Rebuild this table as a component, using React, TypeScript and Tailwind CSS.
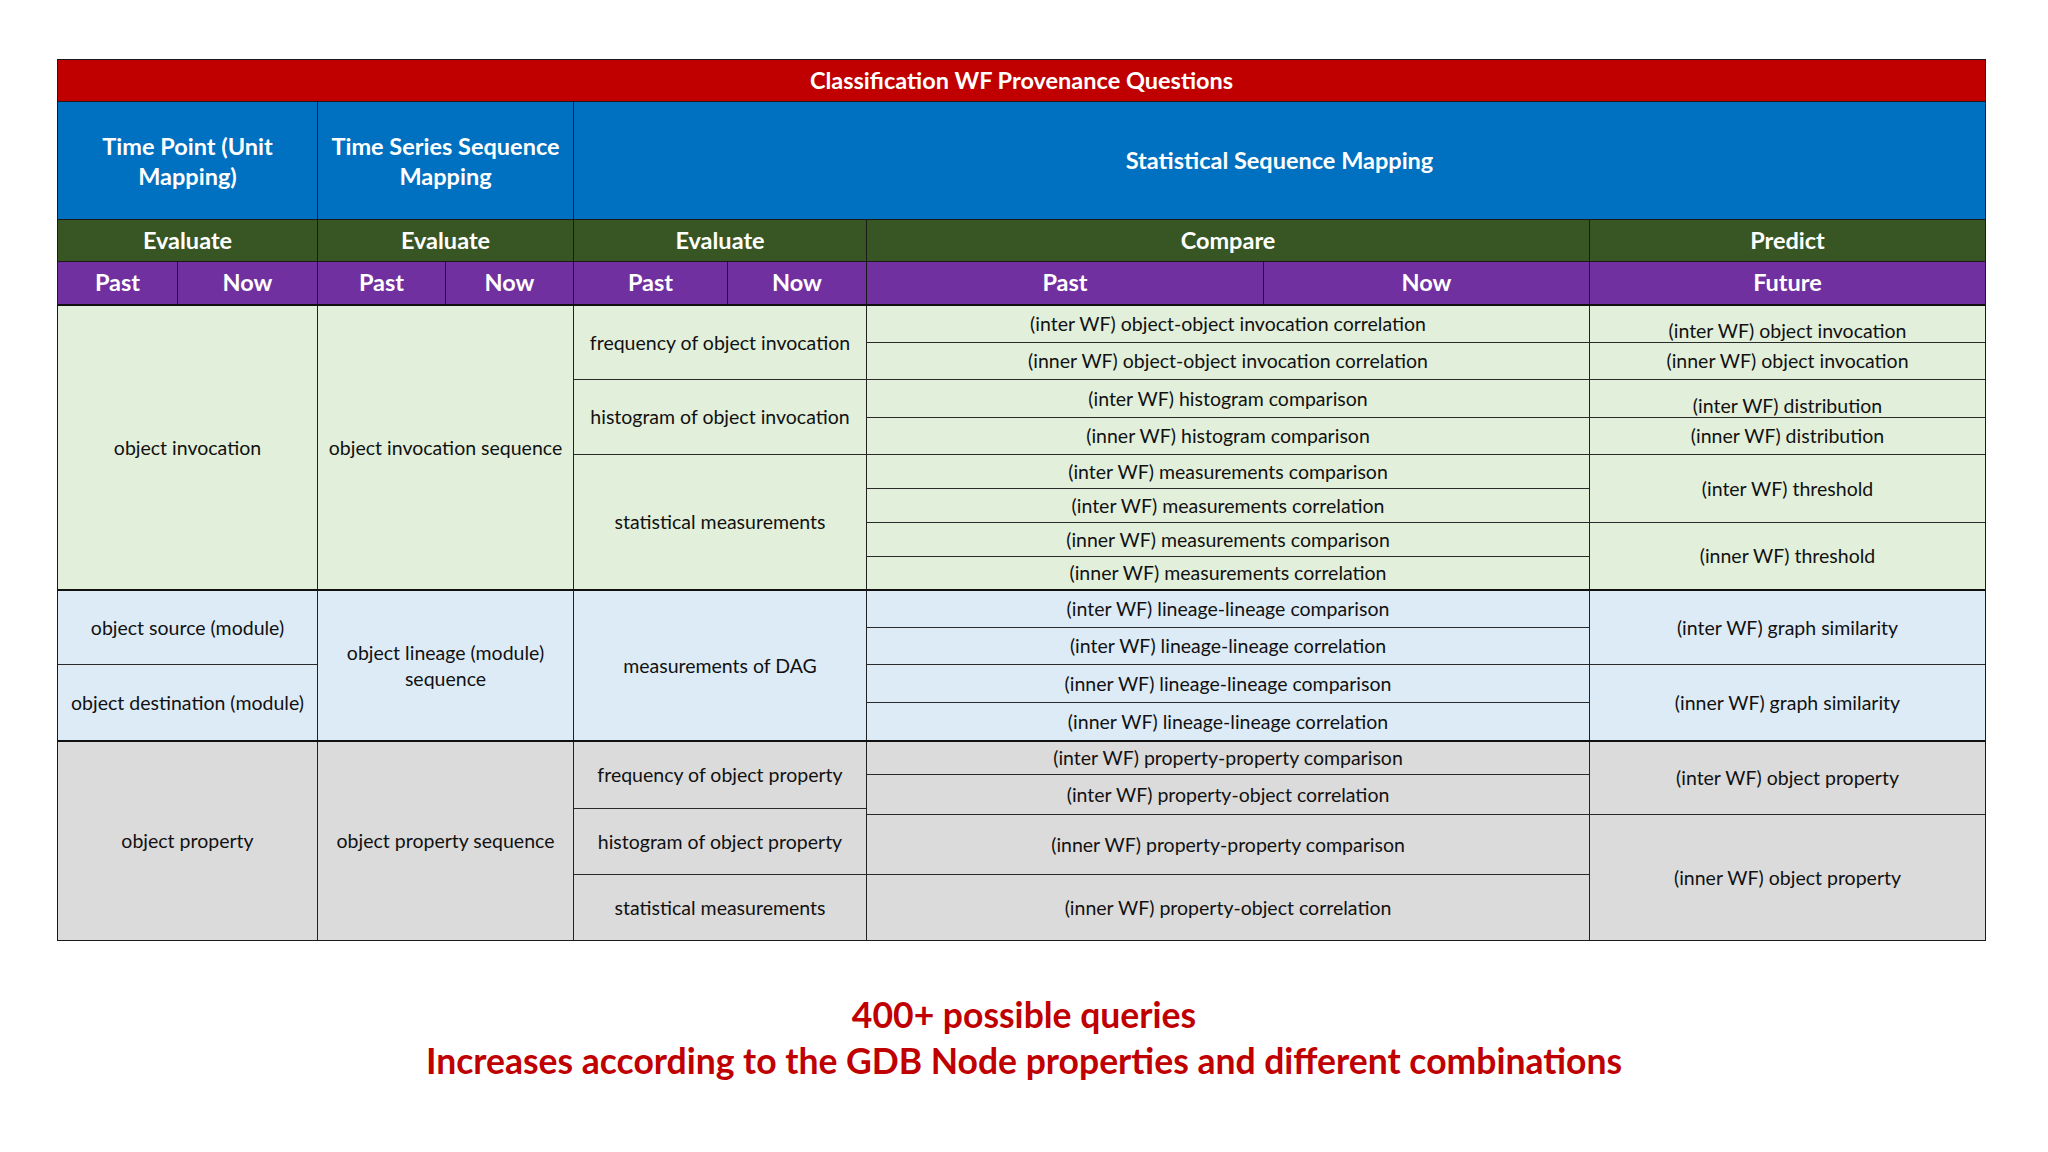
type Cell = { t: string; h?: string; low?: boolean }
type Col = { w: string; cells: Cell[] }
type Section = { bg: string; h: string; last?: boolean; cols: Col[] }

const sections: Section[] = [
  {
    bg: 'bg-[#e2efda]',
    h: 'h-[285px]',
    cols: [
      { w: 'w-[260px]', cells: [{ t: 'object invocation' }] },
      { w: 'w-[256px]', cells: [{ t: 'object invocation sequence' }] },
      {
        w: 'w-[293px]',
        cells: [
          { t: 'frequency of object invocation', h: 'h-[74px]' },
          { t: 'histogram of object invocation', h: 'h-[75px]' },
          { t: 'statistical measurements' },
        ],
      },
      {
        w: 'w-[723px]',
        cells: [
          { t: '(inter WF) object-object invocation correlation', h: 'h-[37px]' },
          { t: '(inner WF) object-object invocation correlation', h: 'h-[37px]' },
          { t: '(inter WF) histogram comparison', h: 'h-[38px]' },
          { t: '(inner WF) histogram comparison', h: 'h-[37px]' },
          { t: '(inter WF) measurements comparison', h: 'h-[34px]' },
          { t: '(inter WF) measurements correlation', h: 'h-[34px]' },
          { t: '(inner WF) measurements comparison', h: 'h-[34px]' },
          { t: '(inner WF) measurements correlation' },
        ],
      },
      {
        w: 'flex-1',
        cells: [
          { t: '(inter WF) object invocation', h: 'h-[37px]', low: true },
          { t: '(inner WF) object invocation', h: 'h-[37px]' },
          { t: '(inter WF) distribution', h: 'h-[38px]', low: true },
          { t: '(inner WF) distribution', h: 'h-[37px]' },
          { t: '(inter WF) threshold', h: 'h-[68px]' },
          { t: '(inner WF) threshold' },
        ],
      },
    ],
  },
  {
    bg: 'bg-[#ddebf7]',
    h: 'h-[151px]',
    cols: [
      {
        w: 'w-[260px]',
        cells: [{ t: 'object source (module)', h: 'h-[74px]' }, { t: 'object destination (module)' }],
      },
      { w: 'w-[256px]', cells: [{ t: 'object lineage (module) sequence' }] },
      { w: 'w-[293px]', cells: [{ t: 'measurements of DAG' }] },
      {
        w: 'w-[723px]',
        cells: [
          { t: '(inter WF) lineage-lineage comparison', h: 'h-[37px]' },
          { t: '(inter WF) lineage-lineage correlation', h: 'h-[37px]' },
          { t: '(inner WF) lineage-lineage comparison', h: 'h-[38px]' },
          { t: '(inner WF) lineage-lineage correlation' },
        ],
      },
      {
        w: 'flex-1',
        cells: [{ t: '(inter WF) graph similarity', h: 'h-[74px]' }, { t: '(inner WF) graph similarity' }],
      },
    ],
  },
  {
    bg: 'bg-[#dbdbdb]',
    h: 'h-[198px]',
    last: true,
    cols: [
      { w: 'w-[260px]', cells: [{ t: 'object property' }] },
      { w: 'w-[256px]', cells: [{ t: 'object property sequence' }] },
      {
        w: 'w-[293px]',
        cells: [
          { t: 'frequency of object property', h: 'h-[67px]' },
          { t: 'histogram of object property', h: 'h-[66px]' },
          { t: 'statistical measurements' },
        ],
      },
      {
        w: 'w-[723px]',
        cells: [
          { t: '(inter WF) property-property comparison', h: 'h-[33px]' },
          { t: '(inter WF) property-object correlation', h: 'h-[40px]' },
          { t: '(inner WF) property-property comparison', h: 'h-[60px]' },
          { t: '(inner WF) property-object correlation' },
        ],
      },
      {
        w: 'flex-1',
        cells: [{ t: '(inter WF) object property', h: 'h-[73px]' }, { t: '(inner WF) object property' }],
      },
    ],
  },
]

const subHeads = [
  { t: 'Past', w: 'w-[120px]' },
  { t: 'Now', w: 'w-[140px]' },
  { t: 'Past', w: 'w-[128px]' },
  { t: 'Now', w: 'w-[128px]' },
  { t: 'Past', w: 'w-[154px]' },
  { t: 'Now', w: 'w-[139px]' },
  { t: 'Past', w: 'w-[397px]' },
  { t: 'Now', w: 'w-[326px]' },
  { t: 'Future', w: 'flex-1' },
]

const actions = [
  { t: 'Evaluate', w: 'w-[260px]' },
  { t: 'Evaluate', w: 'w-[256px]' },
  { t: 'Evaluate', w: 'w-[293px]' },
  { t: 'Compare', w: 'w-[723px]' },
  { t: 'Predict', w: 'flex-1' },
]

function BodySection({ section }: { section: Section }) {
  return (
    <div
      className={`flex ${section.h} ${section.bg} ${section.last ? '' : 'border-b-2 border-[#111]'}`}
    >
      {section.cols.map((col, ci) => (
        <div
          key={ci}
          className={`flex flex-col ${col.w} ${ci < section.cols.length - 1 ? 'border-r border-[#222]' : ''}`}
        >
          {col.cells.map((cell, i) => {
            const isLast = i === col.cells.length - 1
            return (
              <div
                key={i}
                className={`flex items-center justify-center text-center px-1 leading-[26px] whitespace-nowrap ${
                  isLast ? 'flex-1' : `${cell.h} border-b border-[#2a2a2a]`
                } ${cell.low ? 'pt-[14px]' : ''}`}
              >
                {cell.t === 'object lineage (module) sequence' ? (
                  <span>
                    object lineage (module)
                    <br />
                    sequence
                  </span>
                ) : (
                  cell.t
                )}
              </div>
            )
          })}
        </div>
      ))}
    </div>
  )
}

export default function App() {
  return (
    <div className="min-h-[1152px] w-full bg-white pt-[59px] font-['Lato',sans-serif]">
      <div className="ml-[57px] w-[1929px] border border-[#1a1a1a] text-[19.5px] text-[#111]">
        <div className="flex h-[42px] items-center justify-center border-b border-[#1a1a1a] bg-[#c00000] text-[23.5px] font-bold text-white">
          Classification WF Provenance Questions
        </div>

        <div className="flex h-[118px] border-b border-[#1a1a1a] bg-[#0070c0] text-[23.5px] font-bold text-white">
          <div className="flex w-[260px] items-center justify-center border-r border-[#1a1a1a] px-6 text-center leading-[30px]">
            Time Point (Unit Mapping)
          </div>
          <div className="flex w-[256px] items-center justify-center border-r border-[#1a1a1a] px-1 text-center leading-[30px]">
            Time Series Sequence Mapping
          </div>
          <div className="flex flex-1 items-center justify-center">Statistical Sequence Mapping</div>
        </div>

        <div className="flex h-[42px] border-b border-[#1a1a1a] bg-[#375623] text-[23.5px] font-bold text-white">
          {actions.map((a, i) => (
            <div
              key={i}
              className={`flex items-center justify-center ${a.w} ${i < actions.length - 1 ? 'border-r border-[#1a1a1a]' : ''}`}
            >
              {a.t}
            </div>
          ))}
        </div>

        <div className="flex h-[44px] border-b-2 border-[#111] bg-[#7030a0] text-[23.5px] font-bold text-white">
          {subHeads.map((s, i) => (
            <div
              key={i}
              className={`flex items-center justify-center ${s.w} ${i < subHeads.length - 1 ? 'border-r border-[#1a1a1a]' : ''}`}
            >
              {s.t}
            </div>
          ))}
        </div>

        {sections.map((s, i) => (
          <BodySection key={i} section={s} />
        ))}
      </div>

      <div className="mt-[51px] text-center text-[35.5px] font-bold leading-[46px] text-[#c00000]">
        <div>400+ possible queries</div>
        <div>Increases according to the GDB Node properties and different combinations</div>
      </div>
    </div>
  )
}
